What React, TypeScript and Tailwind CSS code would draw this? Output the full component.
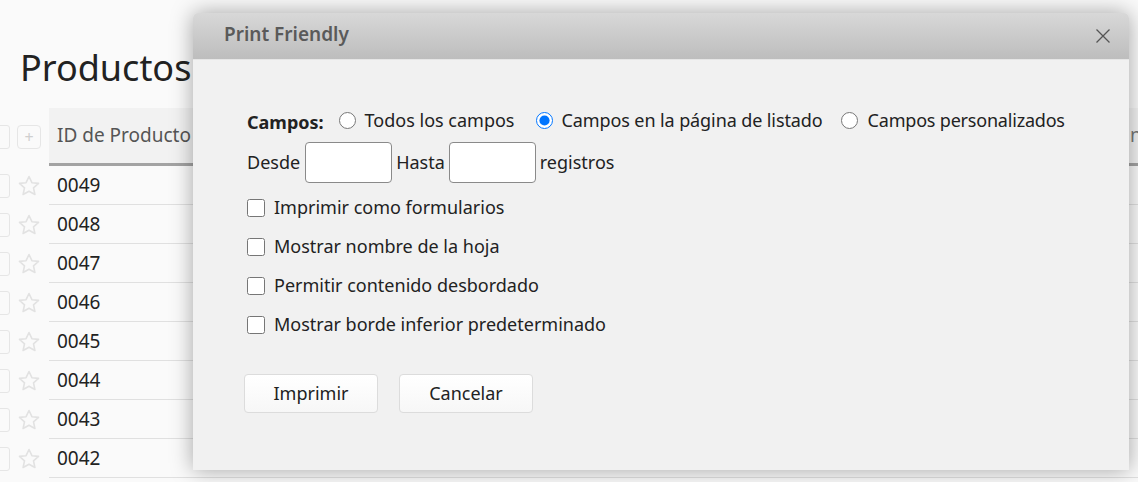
import React from "react";

const rows = ["0049", "0048", "0047", "0046", "0045", "0044", "0043", "0042"];

function Star() {
  return (
    <svg width="24" height="24" viewBox="0 0 24 24" fill="none" stroke="#e2e2e2" strokeWidth="1.6" strokeLinejoin="round">
      <path d="M12 2.5l2.9 6.2 6.6.7-5 4.5 1.4 6.6L12 17.2l-5.9 3.3 1.4-6.6-5-4.5 6.6-.7z" />
    </svg>
  );
}

export default function App() {
  return (
    <div className="relative w-[1138px] h-[482px] overflow-hidden bg-[#fafafa]" style={{ fontFamily: '"Noto Sans", "Open Sans", sans-serif' }}>
      {/* background page */}
      <div className="pt-[44px]">
        <h1 className="pl-[20px] text-[36px] leading-[48px] text-[#222]">Productos</h1>
        <div className="mt-[16px]">
          <div className="flex h-[58px]">
            <div className="w-[49px] shrink-0 flex items-center">
              <div className="w-[17px] h-[24px] ml-[-7px] border border-[#e6e6e6] rounded-[3px]" />
              <div className="ml-[7px] w-[24px] h-[24px] border border-[#e6e6e6] rounded-[4px] flex items-center justify-center text-[#cfcfcf] text-[16px] leading-none">+</div>
            </div>
            <div className="flex-1 flex bg-[#f2f2f2] border-b-[3px] border-[#a3a3a3]">
              <div className="w-[1075px] shrink-0 flex items-center pl-[8px] text-[19px] text-[#555]">ID de Producto</div>
              <div className="flex items-center pl-[6px] text-[19px] text-[#777]">nom</div>
            </div>
          </div>
          {rows.map((r) => (
            <div key={r} className="flex h-[39px]">
              <div className="w-[49px] shrink-0 flex items-center">
                <div className="w-[17px] h-[24px] ml-[-7px] border border-[#e6e6e6] rounded-[3px]" />
                <div className="ml-[7px]"><Star /></div>
              </div>
              <div className="flex-1 flex items-center border-b border-[#e0e0e0] pl-[8px] pt-[1px] text-[19px] text-[#222]">{r}</div>
            </div>
          ))}
        </div>
      </div>

      {/* dialog */}
      <div className="absolute left-[193px] top-[13px] w-[936px] h-[457px] rounded-t-[5px] bg-[#f1f1f1] shadow-[0_0_22px_rgba(0,0,0,0.35)] flex flex-col">
        <div className="h-[47px] rounded-t-[5px] bg-gradient-to-b from-[#d8d8d8] to-[#bdbdbd] border-b border-[#e6e6e6] flex items-center justify-between pl-[31px] pr-[18px]">
          <span className="text-[19px] font-semibold text-[#5a5a5a] mt-[-3px]">Print Friendly</span>
          <svg width="16" height="16" viewBox="0 0 16 16" stroke="#555" strokeWidth="1.3">
            <path d="M1.5 1.5l13 13M14.5 1.5l-13 13" />
          </svg>
        </div>
        <div className="pl-[54px] pt-[48px] text-[18px] text-[#222]">
          <div className="flex items-center h-[24px]">
            <span className="font-bold mr-[15px] mt-[4px]">Campos:</span>
            <label className="flex items-center mr-[21px]">
              <input type="radio" name="campos" className="w-[17px] h-[17px] m-0 mr-[9px]" />
              Todos los campos
            </label>
            <label className="flex items-center mr-[18px]">
              <input type="radio" name="campos" defaultChecked className="w-[17px] h-[17px] m-0 mr-[9px]" />
              <span className="tracking-[-0.1px]">Campos en la página de listado</span>
            </label>
            <label className="flex items-center">
              <input type="radio" name="campos" className="w-[17px] h-[17px] m-0 mr-[10px]" />
              <span className="tracking-[-0.2px]">Campos personalizados</span>
            </label>
          </div>
          <div className="flex items-center mt-[10px] h-[40px]">
            <span>Desde</span>
            <input type="text" className="w-[87px] h-[41px] ml-[5px] mr-[4px] bg-white border border-[#8a8a8a] rounded-[4px]" />
            <span>Hasta</span>
            <input type="text" className="w-[87px] h-[41px] ml-[4px] mr-[4px] bg-white border border-[#8a8a8a] rounded-[4px]" />
            <span>registros</span>
          </div>
          <div className="mt-[6px]">
            {[
              "Imprimir como formularios",
              "Mostrar nombre de la hoja",
              "Permitir contenido desbordado",
              "Mostrar borde inferior predeterminado",
            ].map((t) => (
              <label key={t} className="flex items-center h-[39px]">
                <input type="checkbox" className="w-[18px] h-[18px] m-0 mr-[9px]" />
                {t}
              </label>
            ))}
          </div>
          <div className="flex gap-[21px] mt-[30px] ml-[-3px]">
            <button className="w-[134px] h-[39px] rounded-[4px] border border-[#dcdcdc] bg-gradient-to-b from-white to-[#f7f7f7] text-[18px] text-[#222]">Imprimir</button>
            <button className="w-[134px] h-[39px] rounded-[4px] border border-[#dcdcdc] bg-gradient-to-b from-white to-[#f7f7f7] text-[18px] text-[#222]">Cancelar</button>
          </div>
        </div>
      </div>
    </div>
  );
}
